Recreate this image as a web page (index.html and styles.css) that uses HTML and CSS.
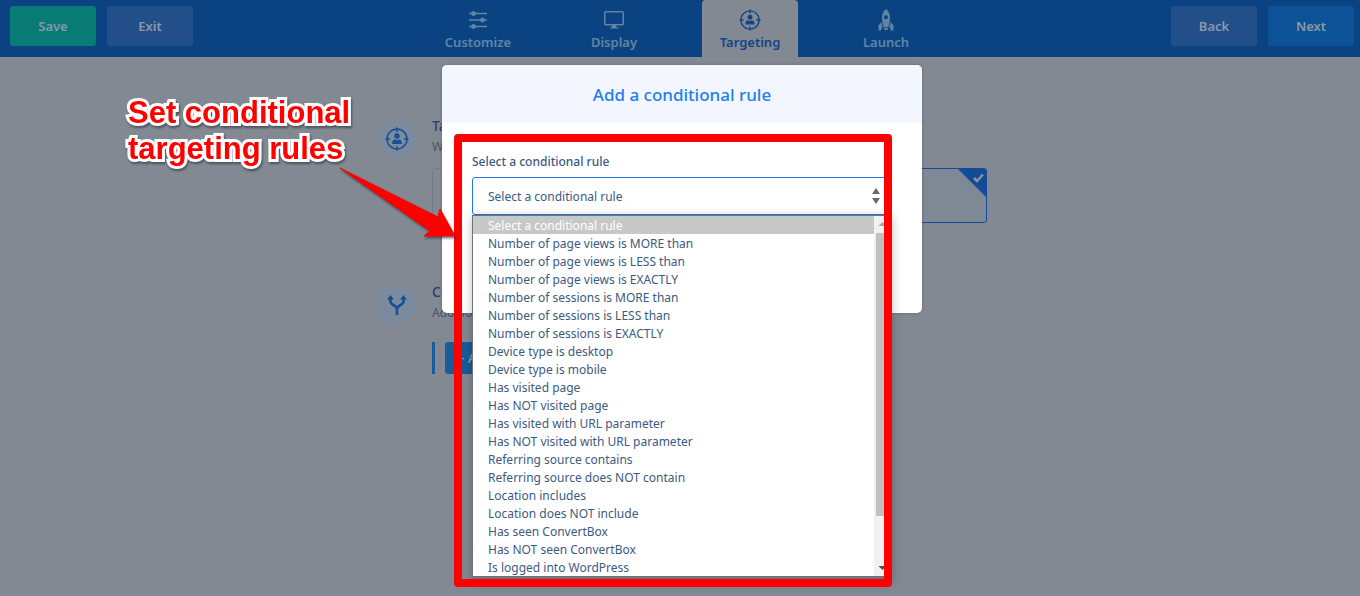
FILE: index.html
```html
<!DOCTYPE html>
<html lang="en">
<head>
<meta charset="utf-8">
<meta name="viewport" content="width=device-width, initial-scale=1">
<title>Add a conditional rule</title>
<link rel="stylesheet" href="styles.css">
</head>
<body>
<svg class="sprite" aria-hidden="true">
  <symbol id="crosshair" viewBox="0 0 24 24">
    <circle cx="12" cy="12" r="10" fill="none" stroke="currentColor" stroke-width="1.500"/>
    <path d="M12 0.500v4.500M12 19v4.500M0.500 12h4.500M19 12h4.500" stroke="currentColor" stroke-width="1.500"/>
    <circle cx="12" cy="9" r="2.700" fill="currentColor"/>
    <path d="M7.200 17v-1.600c0-2 1.600-3 3.200-3l1.600 1 1.600-1c1.600 0 3.200 1 3.200 3V17z" fill="currentColor"/>
  </symbol>
</svg>

<header class="topbar">
  <div class="actions">
    <button class="btn btn-save" type="button">Save</button>
    <button class="btn" type="button">Exit</button>
  </div>
  <nav class="tabs">
    <a class="tab" href="#customize">
      <svg class="tab-icon" viewBox="0 0 22 22" fill="currentColor" stroke="currentColor"><path d="M2 4.500h18M2 11h18M2 17.500h18" stroke-width="1.300"/><circle cx="6.500" cy="4.500" r="2"/><circle cx="15.500" cy="11" r="2"/><circle cx="6.500" cy="17.500" r="2"/></svg>
      Customize
    </a>
    <a class="tab" href="#display">
      <svg class="tab-icon" viewBox="0 0 22 22" fill="none" stroke="currentColor"><rect x="1.750" y="2.750" width="18.500" height="13" rx="1" stroke-width="1.500"/><path d="M9 16h4l.6 2.500h2v1H7v-1h1.500z" fill="currentColor" stroke="none"/></svg>
      Display
    </a>
    <a class="tab tab-active" href="#targeting" aria-current="page">
      <svg class="tab-icon"><use href="#crosshair"/></svg>
      Targeting
    </a>
    <a class="tab" href="#launch">
      <svg class="tab-icon" viewBox="0 0 22 22" fill="currentColor"><path fill-rule="evenodd" d="M11 0c2.600 2 4 5 4 8.500 0 3.500-.8 7-1.500 9.500h-5C7.800 15.500 7 12 7 8.500 7 5 8.400 2 11 0zm0 6.200a2 2 0 1 0 0 4 2 2 0 0 0 0-4z"/><path d="M6.400 13l1.200 5.500L7 19l-1.500 3-2-1v-4.500zM15.600 13l-1.200 5.500.6.500 1.500 3 2-1v-4.500zM8.800 18.800h4.400l-.7 2.200h-3z"/></svg>
      Launch
    </a>
  </nav>
  <div class="actions actions-end">
    <button class="btn" type="button">Back</button>
    <button class="btn btn-next" type="button">Next</button>
  </div>
</header>

<main class="page">
  <section class="group">
    <span class="badge"><svg class="badge-icon"><use href="#crosshair"/></svg></span>
    <div class="group-body">
      <h2 class="group-title">Targ</h2>
      <p class="group-text">Who</p>
      <div class="cards">
        <div class="card"></div>
        <div class="card card-selected">
          <svg class="card-corner" viewBox="0 0 28 28"><path d="M0 0h28v28z" fill="#124c98"/><path d="M16 9l3 3 6-6.500" fill="none" stroke="#8d939d" stroke-width="2.500"/></svg>
        </div>
      </div>
    </div>
  </section>
  <section class="group">
    <span class="badge">
      <svg class="badge-icon" viewBox="0 0 24 24"><path d="M5.500 5v3.500c0 4 6.500 3 6.500 8V22M18.500 5v3.500c0 4-6.500 3-6.500 8" fill="none" stroke="currentColor" stroke-width="2.600"/><path d="M2 6.500l3.500-4.500L9 6.500zM15 6.500l3.500-4.500L22 6.500z" fill="currentColor"/></svg>
    </span>
    <div class="group-body">
      <h2 class="group-title">Cond</h2>
      <p class="group-text">Addition</p>
      <div class="add-row"><button class="btn-add" type="button">+ Add</button></div>
    </div>
  </section>
</main>

<div class="overlay">
  <div class="dialog" role="dialog" aria-labelledby="dialog-title">
    <h1 class="dialog-title" id="dialog-title">Add a conditional rule</h1>
    <div class="dialog-body">
      <label class="field-label" for="rule">Select a conditional rule</label>
      <div class="field">
        <select class="field-select" id="rule"><option>Select a conditional rule</option></select>
        <svg class="field-arrows" viewBox="0 0 8 16"><path d="M4 0l4 6H0zM4 16l4-6H0z" fill="#666a75"/></svg>
        <div class="menu">
          <ul class="options" role="listbox" aria-label="Conditional rules">
            <li class="option option-selected" role="option" aria-selected="true">Select a conditional rule</li>
            <li class="option" role="option">Number of page views is MORE than</li>
            <li class="option" role="option">Number of page views is LESS than</li>
            <li class="option" role="option">Number of page views is EXACTLY</li>
            <li class="option" role="option">Number of sessions is MORE than</li>
            <li class="option" role="option">Number of sessions is LESS than</li>
            <li class="option" role="option">Number of sessions is EXACTLY</li>
            <li class="option" role="option">Device type is desktop</li>
            <li class="option" role="option">Device type is mobile</li>
            <li class="option" role="option">Has visited page</li>
            <li class="option" role="option">Has NOT visited page</li>
            <li class="option" role="option">Has visited with URL parameter</li>
            <li class="option" role="option">Has NOT visited with URL parameter</li>
            <li class="option" role="option">Referring source contains</li>
            <li class="option" role="option">Referring source does NOT contain</li>
            <li class="option" role="option">Location includes</li>
            <li class="option" role="option">Location does NOT include</li>
            <li class="option" role="option">Has seen ConvertBox</li>
            <li class="option" role="option">Has NOT seen ConvertBox</li>
            <li class="option" role="option">Is logged into WordPress</li>
          </ul>
          <div class="scrollbar">
            <svg class="scroll-arrow" viewBox="0 0 17 17"><path d="M8.500 6l4 4h-8z" fill="#a3a3a3"/></svg>
            <span class="scroll-thumb"></span>
            <svg class="scroll-arrow" viewBox="0 0 17 17"><path d="M8.500 11l4-4h-8z" fill="#505050"/></svg>
          </div>
        </div>
      </div>
    </div>
    <div class="highlight"></div>
    <p class="note">Set conditional<br>targeting rules</p>
    <svg class="note-arrow" viewBox="0 0 120 76"><path d="M4 3L102 52l2-8 15 27H88l6-5z" fill="#fe0000" stroke="#fe0000" stroke-linejoin="round"/></svg>
  </div>
</div>
</body>
</html>
```
FILE: styles.css
```css
* { box-sizing: border-box; }

body {
  margin: 0;
  height: 100vh;
  position: relative;
  overflow: hidden;
  background: #838992;
  font-family: "Noto Sans", "Open Sans", sans-serif;
  font-size: 12px;
  color: #3d5a7f;
}

h1, h2, p, ul { margin: 0; padding: 0; }

.sprite { position: absolute; width: 0; height: 0; }

/* Top bar */
.topbar {
  display: flex;
  justify-content: space-between;
  height: 57px;
  padding: 0 6px 0 10px;
  background: #0b4382;
}
.actions { display: flex; flex: 1; gap: 11px; padding-top: 6px; }
.actions-end { justify-content: flex-end; }
.btn {
  width: 86px;
  height: 40px;
  border: 0;
  border-radius: 3px;
  background: #224f8a;
  color: #8b98ac;
  font: 600 13px "Noto Sans", "Open Sans", sans-serif;
}
.btn-save { background: #077b74; }
.btn-next { background: #0c5296; }

.tabs { display: flex; gap: 40px; }
.tab {
  display: flex;
  flex-direction: column;
  align-items: center;
  gap: 1px;
  width: 96px;
  padding-top: 9px;
  border-radius: 4px 4px 0 0;
  color: #5e86a3;
  font-size: 13px;
  font-weight: 600;
  line-height: 20px;
  text-decoration: none;
}
.tab-active { background: #838992; color: #124586; }
.tab-icon { width: 22px; height: 22px; }

/* Page behind the dialog */
.page {
  display: flex;
  flex-direction: column;
  gap: 59px;
  max-width: 614px;
  margin: 0 auto;
  padding: 59px 0 0 5px;
}
.group { display: flex; gap: 16px; }
.badge {
  display: grid;
  place-items: center;
  flex: none;
  width: 38px;
  height: 46px;
  background: radial-gradient(circle, #7b8b9d 0 19px, transparent 20px);
  color: #174e98;
}
.badge-icon { width: 24px; height: 24px; }
.group-body { flex: 1; }
.group-title { font-size: 14px; font-weight: 500; line-height: 20px; color: #243f6b; }
.group-text { font-size: 12px; line-height: 22px; color: #44536c; }
.cards { display: flex; gap: 16px; margin-top: 10px; }
.card { flex: 1; height: 55px; border: 1px solid #747b87; border-radius: 3px; }
.card-selected { position: relative; border-color: #124c98; background: #7f8995; }
.card-corner { position: absolute; top: 0; right: 0; width: 28px; height: 28px; }
.add-row { margin-top: 18px; padding-left: 10px; border-left: 3px solid #185d98; }
.btn-add {
  display: block;
  width: 120px;
  height: 32px;
  border: 0;
  border-radius: 3px;
  padding: 0 12px;
  background: #185d98;
  color: #8b98ac;
  font: 600 13px "Noto Sans", "Open Sans", sans-serif;
  text-align: left;
}

/* Dialog */
.overlay {
  position: absolute;
  inset: 0;
  display: flex;
  justify-content: center;
  align-items: flex-start;
  padding: 65px 0 0 4px;
}
.dialog {
  position: relative;
  width: 480px;
  border-radius: 5px;
  background: #fff;
  box-shadow: 0 0 3px rgba(40, 50, 65, 0.4);
}
.dialog-title {
  padding-top: 2px;
  border-radius: 5px 5px 0 0;
  background: #f3f6ff;
  color: #2080f0;
  font-size: 17px;
  font-weight: 500;
  line-height: 56px;
  text-align: center;
}
.dialog-body { padding: 29px 30px 98px; }
.field-label { display: block; margin-bottom: 5px; font-weight: 500; line-height: 20px; }
.field { position: relative; }
.field-select {
  display: block;
  width: 100%;
  height: 38px;
  padding: 0 15px;
  border: 1px solid #1c7be4;
  border-radius: 3px;
  appearance: none;
  background: #fff;
  color: inherit;
  font: inherit;
}
.field-arrows { position: absolute; top: 11px; right: 12px; width: 8px; height: 16px; }

.menu {
  position: absolute;
  top: 38px;
  left: 0;
  right: 0;
  display: flex;
  border: 1px solid #6f737c;
  border-bottom-width: 3px;
  background: #fff;
  box-shadow: 0 2px 10px rgba(0, 0, 0, 0.25);
}
.options { flex: 1; list-style: none; }
.option { padding: 2px 0 0 15px; line-height: 16px; white-space: nowrap; }
.option-selected { background: #c8c8c8; color: #fff; }
.scrollbar { display: flex; flex-direction: column; width: 17px; background: #f1f1f1; }
.scroll-arrow { flex: none; width: 17px; height: 17px; }
.scroll-thumb { height: 283px; margin: 0 2px auto; background: #c1c1c1; }

/* Annotation */
.highlight {
  position: absolute;
  top: 69px;
  left: 12px;
  width: 438px;
  height: 453px;
  border: 8px solid #fe0000;
  border-radius: 4px;
}
.note {
  position: absolute;
  top: 30px;
  left: -314px;
  color: #fe0000;
  font: bold 31px/36px "Liberation Sans", Arial, sans-serif;
  white-space: nowrap;
  -webkit-text-stroke: 6px #fff;
  paint-order: stroke fill;
  filter: drop-shadow(1px 2px 1px rgba(40, 45, 55, 0.6));
}
.note-arrow {
  position: absolute;
  top: 100px;
  left: -106px;
  width: 120px;
  height: 76px;
  filter: drop-shadow(1px 2px 1px rgba(40, 45, 55, 0.6));
}
```
